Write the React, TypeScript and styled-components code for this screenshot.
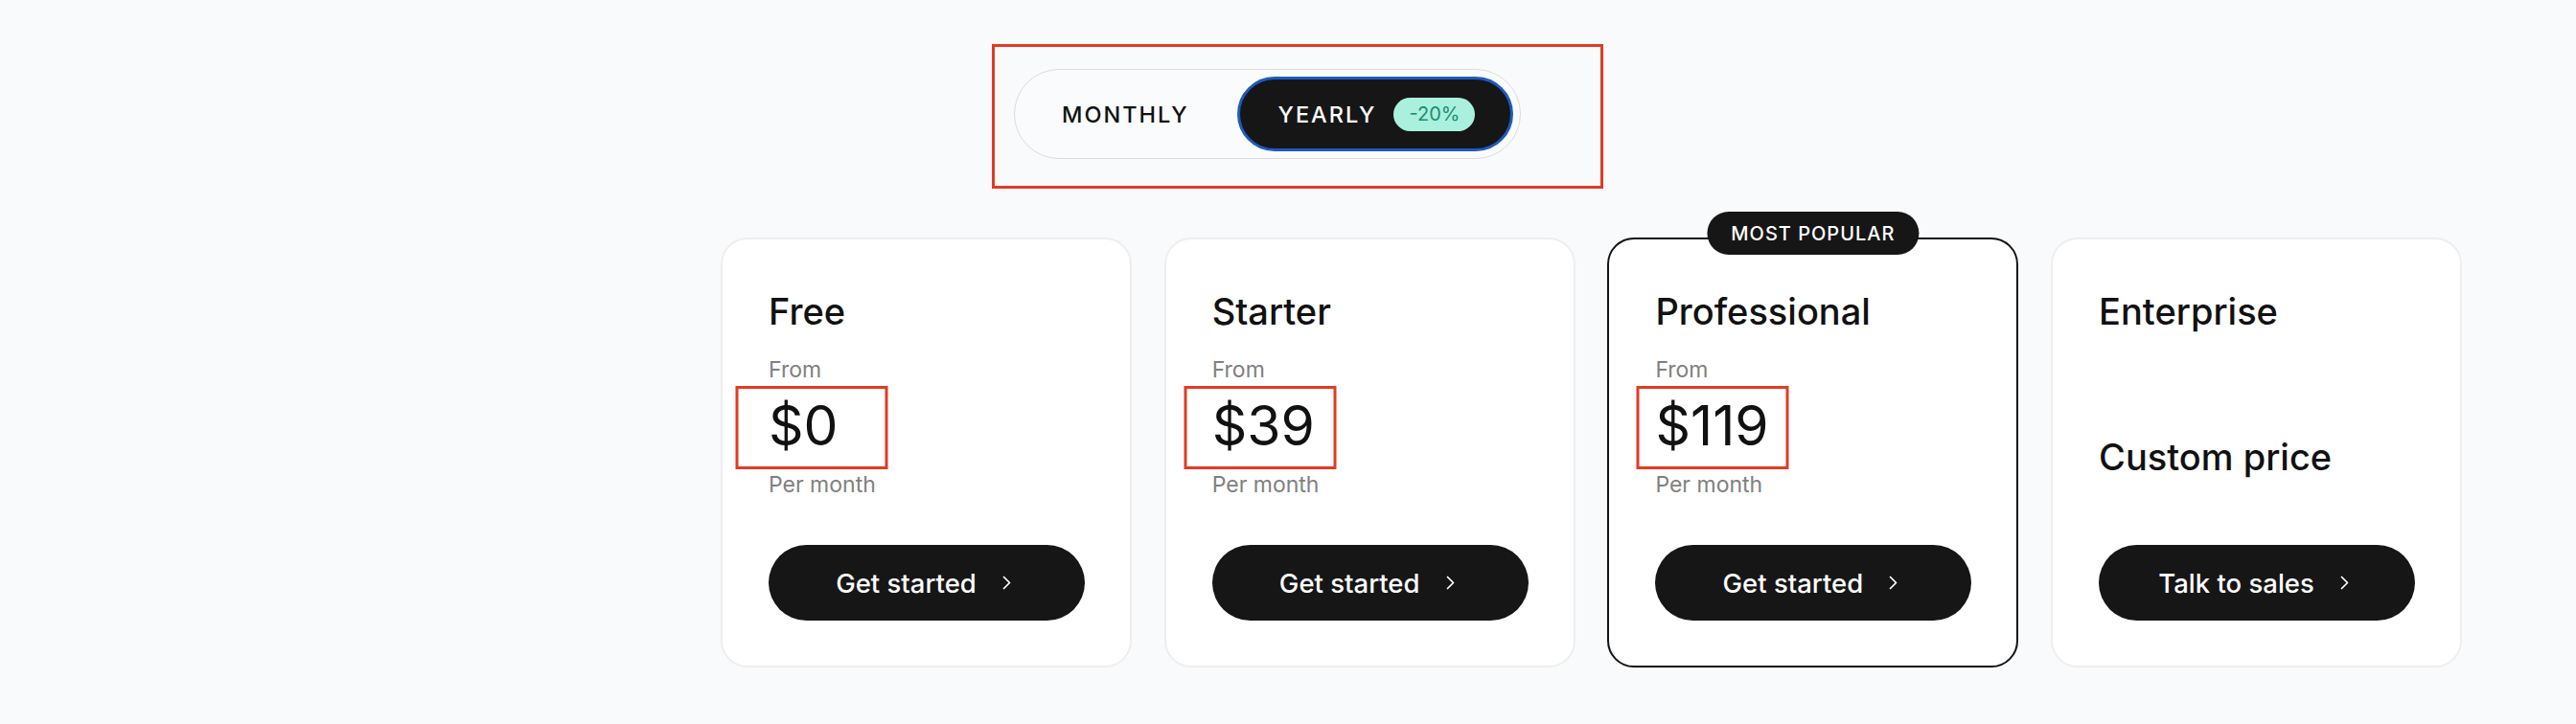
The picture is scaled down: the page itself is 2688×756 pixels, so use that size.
import React, { useState } from "react";
import styled, { createGlobalStyle, css } from "styled-components";

const GlobalStyle = createGlobalStyle`
  html, body {
    margin: 0;
    padding: 0;
    background: #f9fafb;
    font-family: Inter, "Noto Sans", "Liberation Sans", sans-serif;
    color: #111;
  }
  * {
    box-sizing: border-box;
  }
`;

type Plan = {
  name: string;
  price?: string;
  // the red review frame is not exactly centred on every price
  frameShift?: number;
  cta: string;
  popular?: boolean;
};

const plans: Plan[] = [
  { name: "Free", price: "$0", frameShift: 9, cta: "Get started" },
  { name: "Starter", price: "$39", frameShift: -3, cta: "Get started" },
  { name: "Professional", price: "$119", frameShift: 0, cta: "Get started", popular: true },
  { name: "Enterprise", cta: "Talk to sales" },
];

const Chevron = () => (
  <svg width="11" height="15" viewBox="0 0 11 15" fill="none">
    <path
      d="M2.5 1.5 L8.5 7.5 L2.5 13.5"
      stroke="#fff"
      strokeWidth="1.7"
      strokeLinecap="round"
      strokeLinejoin="round"
    />
  </svg>
);

export default function App() {
  const [yearly, setYearly] = useState(true);

  return (
    <>
      <GlobalStyle />
      <Page>
        <ToggleRow>
          <Highlight>
            <Pill>
              <Segment $active={!yearly} onClick={() => setYearly(false)}>
                MONTHLY
              </Segment>
              <Segment $active={yearly} onClick={() => setYearly(true)}>
                YEARLY
                <Discount>-20%</Discount>
              </Segment>
            </Pill>
          </Highlight>
        </ToggleRow>

        <Cards>
          {plans.map((plan) => (
            <Card key={plan.name} $popular={plan.popular}>
              {plan.popular && <Badge>MOST POPULAR</Badge>}
              <PlanName>{plan.name}</PlanName>
              {plan.price ? (
                <>
                  <Label>From</Label>
                  <Price $shift={plan.frameShift ?? 0}>{plan.price}</Price>
                  <PerMonth>Per month</PerMonth>
                </>
              ) : (
                <CustomPrice>Custom price</CustomPrice>
              )}
              <Cta>
                {plan.cta}
                <Chevron />
              </Cta>
            </Card>
          ))}
        </Cards>
      </Page>
    </>
  );
}

const Page = styled.main`
  min-height: 756px;
  padding-top: 46px;
`;

const ToggleRow = styled.div`
  display: flex;
  padding-left: 1035px;
`;

const Highlight = styled.div`
  width: 638px;
  height: 151px;
  border: 3px solid #e23b24;
  padding: 23px 0 0 20px;
`;

const Pill = styled.div`
  display: inline-flex;
  align-items: center;
  gap: 7px;
  height: 94px;
  padding: 7px;
  border: 1px solid #dcdcdc;
  border-radius: 999px;
  background: #fafbfc;
`;

const Segment = styled.button<{ $active?: boolean }>`
  display: flex;
  align-items: center;
  gap: 18px;
  height: 78px;
  border-radius: 999px;
  border: 3px solid transparent;
  background: transparent;
  color: #111;
  font-family: inherit;
  font-size: 23.5px;
  font-weight: 500;
  letter-spacing: 2px;
  padding: 0 40px 0 39px;
  cursor: pointer;

  ${(p) =>
    p.$active &&
    css`
      background: #161616;
      border-color: #1d5bbf;
      color: #fff;
      padding: 0 37px 0 40px;
    `}
`;

const Discount = styled.span`
  display: inline-flex;
  align-items: center;
  height: 35px;
  padding: 0 16px;
  border-radius: 999px;
  background: #a9f1dd;
  color: #1f8b72;
  font-size: 20px;
  font-weight: 400;
  letter-spacing: 0;
`;

const Cards = styled.div`
  display: grid;
  grid-template-columns: repeat(4, 429px);
  column-gap: 33.7px;
  padding-left: 752px;
  margin-top: 51px;
`;

const Card = styled.div<{ $popular?: boolean }>`
  position: relative;
  display: flex;
  flex-direction: column;
  align-items: flex-start;
  height: 449px;
  padding: 52px 47px 47px 48px;
  background: #fff;
  border: 2px solid ${(p) => (p.$popular ? "#131313" : "#eeeeee")};
  border-radius: 28px;
`;

const Badge = styled.div`
  position: absolute;
  top: -29px;
  left: 50%;
  transform: translateX(-50%);
  height: 45px;
  padding: 0 25px;
  display: flex;
  align-items: center;
  border-radius: 999px;
  background: #161616;
  color: #fff;
  font-size: 20px;
  font-weight: 500;
  letter-spacing: 1px;
  white-space: nowrap;
`;

const PlanName = styled.h3`
  margin: 0;
  font-size: 38px;
  line-height: 46px;
  font-weight: 500;
  color: #111;
`;

const Label = styled.div`
  margin-top: 23.6px;
  font-size: 23px;
  line-height: 28px;
  color: #808080;
`;

const Price = styled.div<{ $shift: number }>`
  position: relative;
  margin-top: 13.3px;
  font-size: 57px;
  line-height: 64px;
  font-weight: 400;
  color: #111;

  &::after {
    content: "";
    position: absolute;
    left: calc(50% + ${(p) => p.$shift}px);
    top: -10px;
    width: 153px;
    height: 81px;
    transform: translateX(-50%);
    border: 3px solid #e23b24;
  }
`;

const PerMonth = styled(Label)`
  margin-top: 14.7px;
`;

const CustomPrice = styled(PlanName)`
  margin-top: 105.7px;
`;

const Cta = styled.button`
  margin-top: auto;
  width: 330px;
  height: 79px;
  display: flex;
  align-items: center;
  justify-content: center;
  gap: 26px;
  padding: 0 6px 0 0;
  border: none;
  border-radius: 999px;
  background: #161616;
  color: #fff;
  font-family: inherit;
  font-size: 27.5px;
  font-weight: 500;
  cursor: pointer;
`;
